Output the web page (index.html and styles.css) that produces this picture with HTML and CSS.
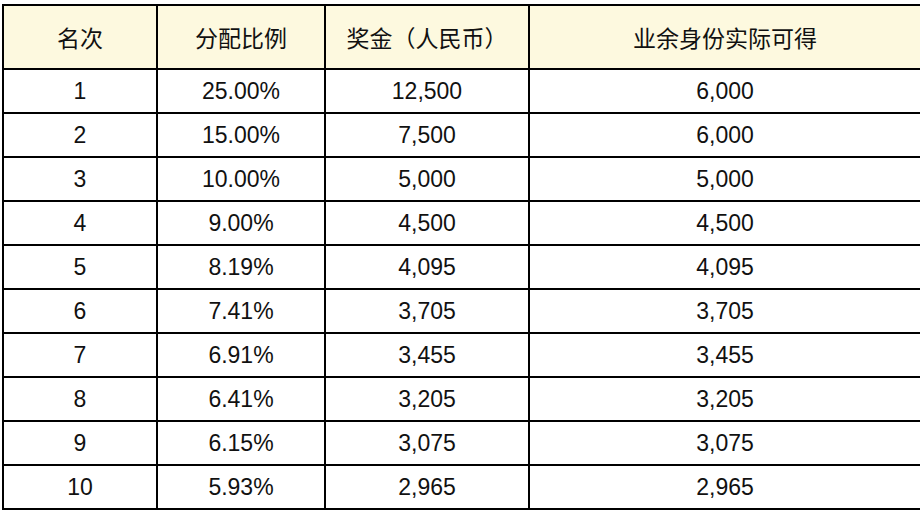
FILE: index.html
```html
<!DOCTYPE html>
<html lang="zh-CN">
<head>
<meta charset="utf-8">
<link rel="stylesheet" href="styles.css">
</head>
<body>
<div class="table">
  <div class="cell head">名次</div>
  <div class="cell head">分配比例</div>
  <div class="cell head">奖金（人民币）</div>
  <div class="cell head">业余身份实际可得</div>

  <div class="cell">1</div><div class="cell">25.00%</div><div class="cell">12,500</div><div class="cell">6,000</div>
  <div class="cell">2</div><div class="cell">15.00%</div><div class="cell">7,500</div><div class="cell">6,000</div>
  <div class="cell">3</div><div class="cell">10.00%</div><div class="cell">5,000</div><div class="cell">5,000</div>
  <div class="cell">4</div><div class="cell">9.00%</div><div class="cell">4,500</div><div class="cell">4,500</div>
  <div class="cell">5</div><div class="cell">8.19%</div><div class="cell">4,095</div><div class="cell">4,095</div>
  <div class="cell">6</div><div class="cell">7.41%</div><div class="cell">3,705</div><div class="cell">3,705</div>
  <div class="cell">7</div><div class="cell">6.91%</div><div class="cell">3,455</div><div class="cell">3,455</div>
  <div class="cell">8</div><div class="cell">6.41%</div><div class="cell">3,205</div><div class="cell">3,205</div>
  <div class="cell">9</div><div class="cell">6.15%</div><div class="cell">3,075</div><div class="cell">3,075</div>
  <div class="cell">10</div><div class="cell">5.93%</div><div class="cell">2,965</div><div class="cell">2,965</div>
</div>
</body>
</html>
```
FILE: styles.css
```css
html, body {
  margin: 0;
  padding: 0;
  background: #ffffff;
  overflow: hidden;
}

body {
  padding: 4px 0 0 2px;
  font-family: "Liberation Sans", "Noto Sans CJK SC", sans-serif;
  color: #111111;
}

.table {
  display: grid;
  grid-template-columns: 154px 168px 204px 392px;
  grid-template-rows: 64px repeat(10, 44px);
  width: 920px;
  border-left: 2px solid #000;
  border-top: 2px solid #000;
}

.cell {
  box-sizing: border-box;
  border-right: 2px solid #000;
  border-bottom: 2px solid #000;
  display: flex;
  align-items: center;
  justify-content: center;
  font-size: 23px;
  line-height: 1;
  white-space: nowrap;
}

.cell.head {
  background: #fdf9df;
  font-family: "Noto Sans CJK SC", sans-serif;
  font-size: 23px;
}
```
